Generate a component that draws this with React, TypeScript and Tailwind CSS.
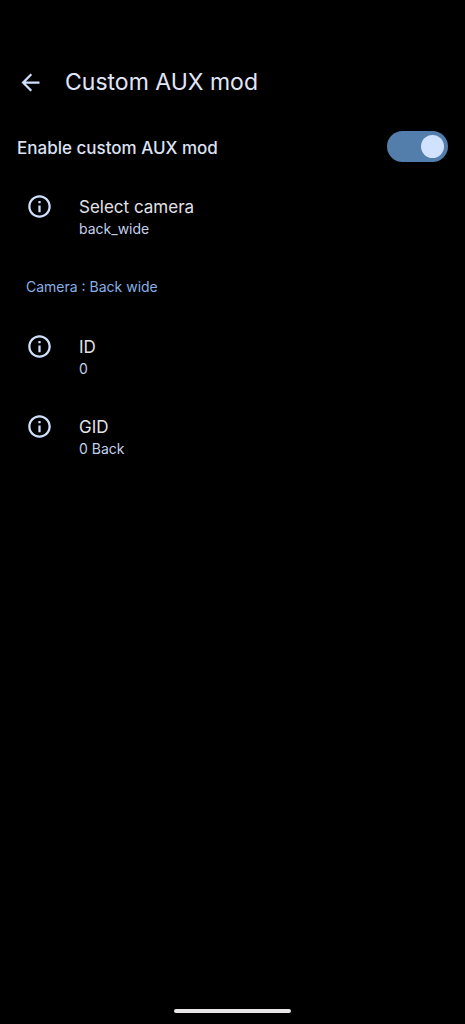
import { useState } from "react";
import { MdArrowBack, MdInfoOutline } from "react-icons/md";

interface Preference {
  title: string;
  summary: string;
}

const cameraInfo: Preference[] = [
  { title: "ID", summary: "0" },
  { title: "GID", summary: "0 Back" },
];

function PreferenceRow({ title, summary }: Preference) {
  return (
    <button type="button" className="flex w-full items-start gap-[26px] px-[26px] py-[18px] text-left">
      <MdInfoOutline size={27} className="-mt-[2px] shrink-0 text-[#cfe0fc]" />
      <span className="flex flex-col">
        <span className="text-[17px] leading-6 text-[#e2e2e9]">{title}</span>
        <span className="text-[14px] leading-5 text-[#c0d0ec]">{summary}</span>
      </span>
    </button>
  );
}

export default function App() {
  const [enabled, setEnabled] = useState(true);

  return (
    <div className="flex min-h-screen flex-col bg-black font-['Inter',sans-serif]">
      {/* App bar */}
      <header className="flex items-center gap-[21px] px-[17px] pt-[65px] pb-4">
        <button type="button" aria-label="Back">
          <MdArrowBack size={27} className="text-[#cfe0fc]" />
        </button>
        <h1 className="text-[23px] leading-[35px] text-[#e0e6f8]">Custom AUX mod</h1>
      </header>

      <main>
        {/* Main switch */}
        <label className="flex cursor-pointer items-start justify-between px-[17px] py-[15px]">
          <span className="pt-[5px] text-[17px] leading-6 font-medium text-[#dce2f4]">Enable custom AUX mod</span>
          <span className="flex h-[31px] w-[61px] items-center rounded-full bg-[#44474f] px-1 has-checked:justify-end has-checked:bg-[#537dab]">
            <input
              type="checkbox"
              role="switch"
              className="size-[23px] appearance-none rounded-full bg-[#8e9099] checked:bg-[#d0e2ff]"
              checked={enabled}
              onChange={e => setEnabled(e.target.checked)}
            />
          </span>
        </label>

        <PreferenceRow title="Select camera" summary="back_wide" />

        {/* Camera details */}
        <section>
          <h2 className="px-[26px] py-5 text-[14px] leading-5 text-[#86b0e8]">
            Camera : Back wide
          </h2>
          {cameraInfo.map(item => (
            <PreferenceRow key={item.title} title={item.title} summary={item.summary} />
          ))}
        </section>
      </main>

      {/* Gesture bar */}
      <footer className="mt-auto flex justify-center pb-[11px]">
        <div className="h-1 w-[117px] rounded-full bg-[#e8e6e6]" />
      </footer>
    </div>
  );
}
